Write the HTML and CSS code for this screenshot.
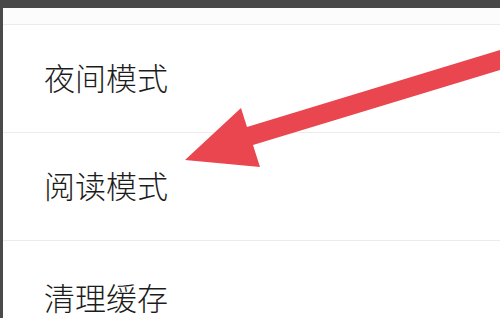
FILE: index.html
```html
<!DOCTYPE html>
<html lang="zh-CN">
<head>
<meta charset="utf-8">
<link rel="stylesheet" href="styles.css">
</head>
<body>
<div class="topbar"></div>
<div class="panel">
  <div class="header"></div>
  <div class="row"><span class="label">夜间模式</span></div>
  <div class="row"><span class="label">阅读模式</span></div>
  <div class="row row-last"><span class="label">清理缓存</span></div>
</div>
<svg class="arrow" width="500" height="318" viewBox="0 0 500 318" aria-hidden="true">
  <polygon points="185,160 241,108 247,127 500,50 500,70 253,145 260,167" fill="#e9464f"/>
</svg>
</body>
</html>
```
FILE: styles.css
```css
html, body {
  margin: 0;
  padding: 0;
}
body {
  width: 500px;
  height: 318px;
  overflow: hidden;
  background: #4a4a4a;
  font-family: "Noto Sans CJK SC", "Noto Sans", sans-serif;
  position: relative;
}
.topbar {
  height: 8px;
  background: #484848;
}
.panel {
  margin-left: 3px;
  background: #ffffff;
  height: 310px;
  overflow: hidden;
}
.header {
  height: 17px;
  box-sizing: border-box;
  background: #fcfcfc;
  border-bottom: 1px solid #ececec;
}
.row {
  box-sizing: border-box;
  height: 108px;
  border-bottom: 1px solid #ececec;
  display: flex;
  align-items: center;
  padding-left: 41px;
  padding-bottom: 4px;
}
.row-last {
  padding-bottom: 0;
  padding-top: 4px;
}
.label {
  font-size: 31px;
  line-height: 1;
  color: #1c1c1c;
  font-weight: 300;
}
.arrow {
  position: absolute;
  left: 0;
  top: 0;
}
```
